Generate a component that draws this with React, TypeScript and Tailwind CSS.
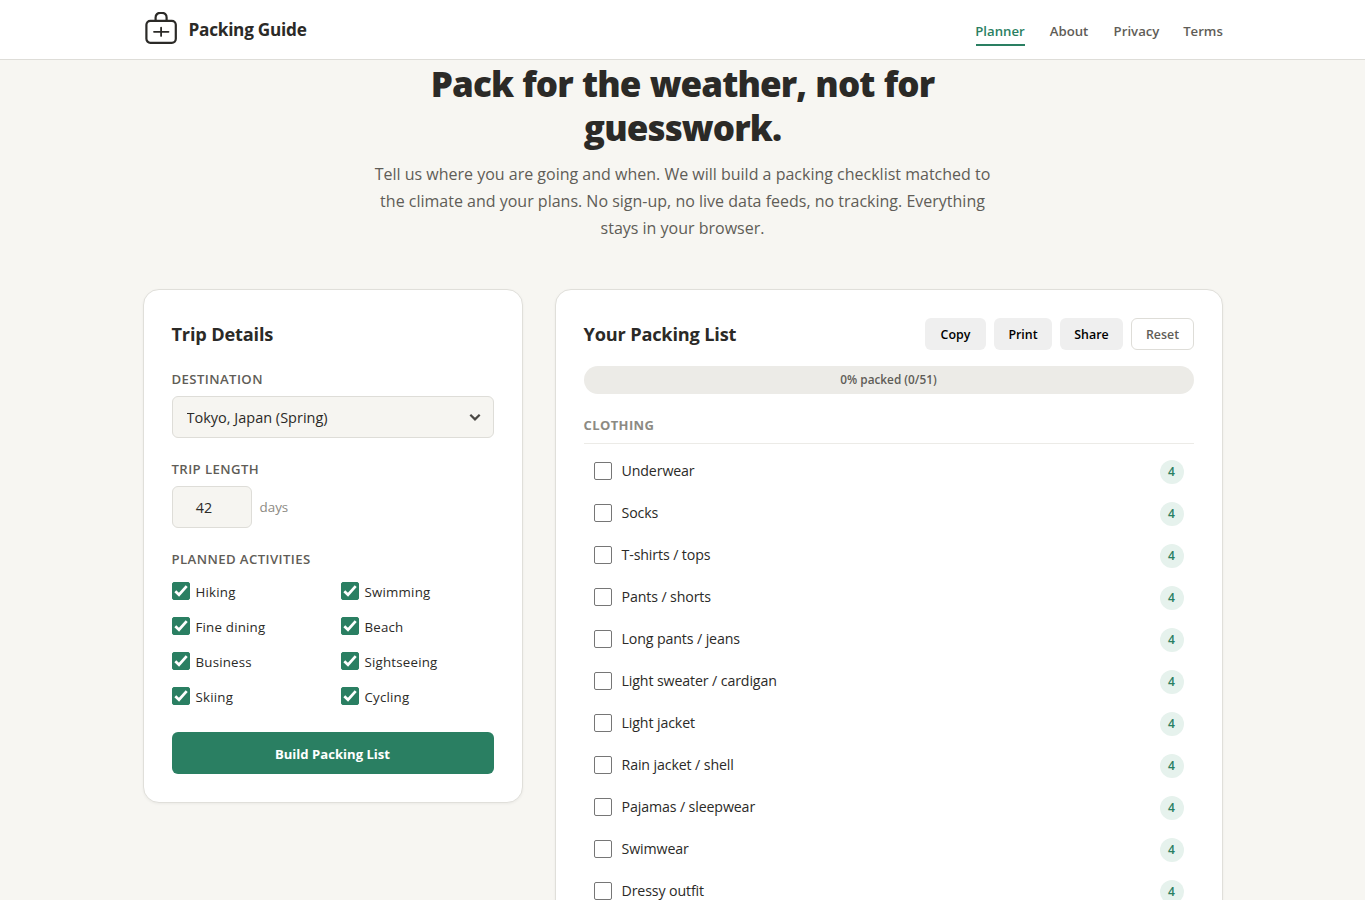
import { useState } from "react";

const NAV = [
  { label: "Planner", width: "w-[49px]", active: true },
  { label: "About", width: "w-[41px]", active: false },
  { label: "Privacy", width: "w-[46px]", active: false },
  { label: "Terms", width: "w-[39px]", active: false },
];

const ACTIVITIES = [
  "Hiking", "Swimming", "Fine dining", "Beach",
  "Business", "Sightseeing", "Skiing", "Cycling",
];

const CLOTHING = [
  "Underwear", "Socks", "T-shirts / tops", "Pants / shorts",
  "Long pants / jeans", "Light sweater / cardigan", "Light jacket",
  "Rain jacket / shell", "Pajamas / sleepwear", "Swimwear", "Dressy outfit",
];

const TOTAL = 51;

function Logo() {
  return (
    <svg className="w-9 h-9 shrink-0" viewBox="0 0 36 36" fill="none" stroke="#2b2a27" strokeWidth={2.2}>
      <rect x="3.4" y="8.8" width="29.4" height="22" rx="4" />
      <path d="M12.6 8.8V5.4a4.6 4.6 0 0 1 4.6-4.6h1.8a4.6 4.6 0 0 1 4.6 4.6v3.4" />
      <path d="M18.1 15.7v8.2M11 19.8h14.5" strokeLinecap="round" strokeWidth={1.8} />
    </svg>
  );
}

function Checkbox({ checked, onChange }: { checked: boolean; onChange: () => void }) {
  return (
    <span className="relative w-[18px] h-[18px] shrink-0">
      <input
        type="checkbox"
        checked={checked}
        onChange={onChange}
        className="block appearance-none w-[18px] h-[18px] rounded-[2px] border border-[#767676] bg-white checked:bg-[#2a7f62] checked:border-[#2a7f62]"
      />
      {checked && (
        <svg className="absolute inset-0 pointer-events-none" width="18" height="18" viewBox="0 0 18 18" fill="none" stroke="#fff" strokeWidth={2.7}>
          <path d="M3.3 9.2L7 12.7L14.7 4.2" />
        </svg>
      )}
    </span>
  );
}

function Header() {
  return (
    <header className="h-[60px] shrink-0 bg-white border-b border-[#deddd8]">
      <div className="w-[1080px] h-full mx-auto flex items-center justify-between">
        <a href="#" className="flex items-center gap-[10px]">
          <Logo />
          <span className="text-[17.2px] font-bold tracking-[-0.015em] text-[#2b2a27] whitespace-nowrap">Packing Guide</span>
        </a>
        <nav className="flex gap-6 pt-[3px]">
          {NAV.map((item) => (
            <a
              key={item.label}
              href="#"
              className={`${item.width} h-[29px] pt-[3px] flex justify-center items-center border-b-2 text-[13.2px] font-semibold whitespace-nowrap ${
                item.active ? "text-[#2a7f62] border-[#2a7f62]" : "text-[#5f5d57] border-transparent"
              }`}
            >
              {item.label}
            </a>
          ))}
        </nav>
      </div>
    </header>
  );
}

function TripForm() {
  const [days, setDays] = useState("42");
  const [activities, setActivities] = useState(ACTIVITIES);
  const label = "h-5 pt-px flex items-center text-[13.2px] tracking-[0.4px] font-semibold text-[#5f5d57] uppercase whitespace-nowrap";

  const toggle = (name: string) =>
    setActivities((a) => (a.includes(name) ? a.filter((n) => n !== name) : [...a, name]));

  return (
    <section className="w-[380px] shrink-0 bg-white border border-[#e0dfda] rounded-2xl p-7 shadow-[0_1px_3px_rgba(0,0,0,0.05)]">
      <h2 className="h-8 pt-[2px] flex items-center text-[18.2px] font-bold text-[#2b2a27] tracking-[-0.01em]">Trip Details</h2>

      <div className={`${label} mt-[19px]`}>Destination</div>
      <div className="relative mt-[7px]">
        <select className="block appearance-none w-full h-[42px] pt-[2px] pl-[14px] pr-9 rounded-md border border-[#deddd8] bg-[#f6f5f1] text-[14.5px] text-[#2b2a27]">
          <option>Tokyo, Japan (Spring)</option>
        </select>
        <svg className="absolute right-[13px] top-[15px] w-3 h-3 pointer-events-none" viewBox="0 0 12 12" fill="none" stroke="#4a4844" strokeWidth={2.2}>
          <path d="M1.3 3.7L6 8.4L10.7 3.7" />
        </svg>
      </div>

      <div className={`${label} mt-[21px]`}>Trip length</div>
      <div className="flex items-center gap-2 mt-[7px]">
        <input
          value={days}
          onChange={(e) => setDays(e.target.value)}
          className="w-20 h-[42px] pl-[14px] pr-[29px] rounded-md border border-[#deddd8] bg-[#f6f5f1] text-center text-[14.3px] text-[#2b2a27]"
        />
        <span className="text-[13.4px] text-[#8c8a83]">days</span>
      </div>

      <div className={`${label} mt-[21px]`}>Planned activities</div>
      <div className="grid grid-cols-2 gap-x-4 mt-1">
        {ACTIVITIES.map((name) => (
          <label key={name} className="h-[35px] flex items-center gap-[6px] text-[13.3px] tracking-[0.2px] text-[#2b2a27]">
            <Checkbox checked={activities.includes(name)} onChange={() => toggle(name)} />
            <span className="pt-1 whitespace-nowrap">{name}</span>
          </label>
        ))}
      </div>

      <button className="block w-full h-[42px] mt-[19px] rounded-md bg-[#2a7f62] text-white text-[13.1px] font-bold pt-[3px]">
        Build Packing List
      </button>
    </section>
  );
}

function PackingList() {
  const [packed, setPacked] = useState<string[]>([]);
  const percent = Math.round((packed.length / TOTAL) * 100);
  const button = "h-8 pt-[2px] pl-px rounded-md text-[12.4px] font-semibold whitespace-nowrap";

  const toggle = (name: string) =>
    setPacked((p) => (p.includes(name) ? p.filter((n) => n !== name) : [...p, name]));

  return (
    <section className="flex-1 h-[800px] bg-white border border-[#e0dfda] rounded-2xl p-7 shadow-[0_1px_3px_rgba(0,0,0,0.05)]">
      <div className="flex items-center justify-between">
        <h2 className="pt-[2px] text-[18.2px] font-bold text-[#2b2a27] tracking-[-0.01em]">Your Packing List</h2>
        <div className="flex gap-2">
          <button className={`${button} w-[61px] bg-[#efefef] text-black`}>Copy</button>
          <button className={`${button} w-[58px] bg-[#efefef] text-black`}>Print</button>
          <button className={`${button} w-[63px] bg-[#efefef] text-black`}>Share</button>
          <button onClick={() => setPacked([])} className={`${button} w-[63px] border border-[#deddd8] text-[#5f5d57]`}>Reset</button>
        </div>
      </div>

      <div className="relative h-7 mt-4 rounded-full bg-[#ecebe7] overflow-hidden">
        <div className="h-full bg-[#bfe0d3]" style={{ width: `${percent}%` }} />
        <span className="absolute inset-0 flex items-center justify-center text-[11.8px] font-semibold text-[#5f5d57]">
          {percent}% packed ({packed.length}/{TOTAL})
        </span>
      </div>

      <h3 className="h-[50px] pt-[14px] flex items-center border-b border-[#ecebe7] text-[13px] font-bold text-[#8c8a83] tracking-[0.03em] uppercase">
        Clothing
      </h3>
      <ul className="mt-[6px]">
        {CLOTHING.map((name) => (
          <li key={name} className="h-[42px] px-[10px] flex items-center justify-between">
            <label className="flex items-center gap-[10px] text-[14.2px] tracking-[-0.12px] text-[#2b2a27]">
              <Checkbox checked={packed.includes(name)} onChange={() => toggle(name)} />
              <span className="whitespace-nowrap">{name}</span>
            </label>
            <span className="w-6 h-6 mt-[2px] rounded-full bg-[#e6f2ed] flex items-center justify-center text-[12px] font-semibold text-[#2a7f62]">4</span>
          </li>
        ))}
      </ul>
    </section>
  );
}

export default function App() {
  return (
    <div className="h-[900px] overflow-hidden flex flex-col bg-[#f7f6f2] font-['Open_Sans','Noto_Sans',sans-serif]">
      <Header />
      <main className="w-[1080px] mx-auto">
        <div className="flex flex-col items-center text-center pt-[2px] whitespace-nowrap">
          <h1 className="text-[35px] leading-[44px] font-extrabold tracking-[-0.9px] [word-spacing:1px] text-[#2b2a27]">
            Pack for the weather, not for<br />guesswork.
          </h1>
          <p className="mt-[11px] text-[16px] leading-[27px] text-[#5f5d57]">
            Tell us where you are going and when. We will build a packing checklist matched to<br />
            the climate and your plans. No sign-up, no live data feeds, no tracking. Everything<br />
            stays in your browser.
          </p>
        </div>
        <div className="flex items-start gap-8 mt-[47px]">
          <TripForm />
          <PackingList />
        </div>
      </main>
    </div>
  );
}
